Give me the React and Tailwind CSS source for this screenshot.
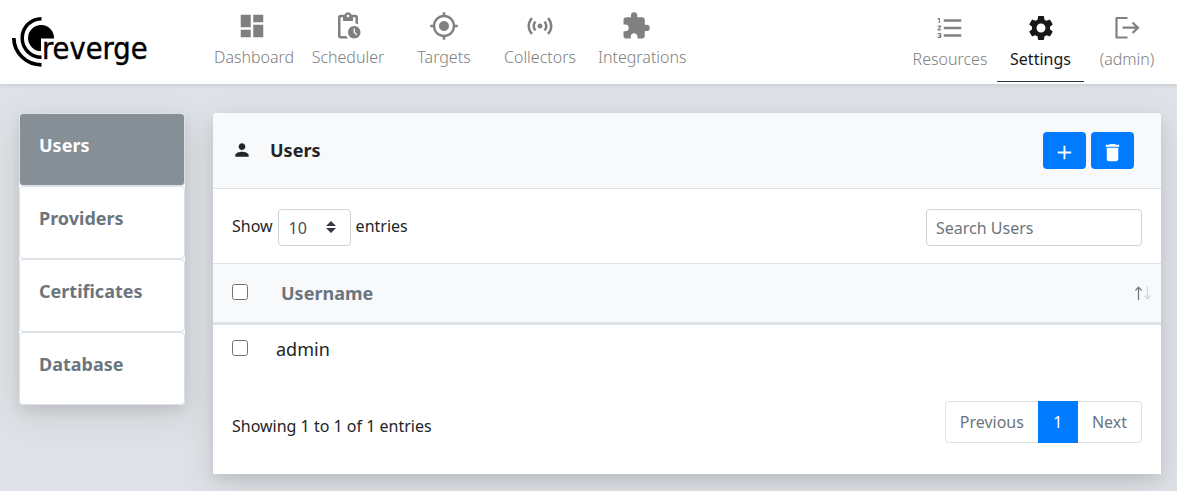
import {
  MdAdd,
  MdDashboard,
  MdDelete,
  MdExtension,
  MdFormatListNumbered,
  MdMyLocation,
  MdPendingActions,
  MdPerson,
  MdSensors,
  MdSettings,
} from "react-icons/md";

function Logo() {
  return (
    <svg width="148" height="60" viewBox="0 0 148 60" role="img" aria-label="reverge">
      <path d="M41 28.500V41A13 13 0 1 1 54 28.500z" fill="#000" />
      <path d="M41.5 8.7a19.3 19.3 0 0 0 0 38.6" fill="none" stroke="#000" strokeWidth="3.5" />
      <path d="M13.8 28a27.7 27.2 0 0 0 27.7 26.8" fill="none" stroke="#000" strokeWidth="3.7" />
      <text
        x="42"
        y="49"
        fontSize="30.500"
        className="font-['DejaVu_Sans_Condensed','DejaVu_Sans',sans-serif]"
        fill="#000"
        stroke="#000"
        strokeWidth="0.4"
      >
        reverge
      </text>
    </svg>
  );
}

function LogoutIcon() {
  return (
    <svg width="30" height="30" viewBox="0 0 30 30" fill="none" stroke="currentColor" strokeWidth="2.2">
      <path d="M15.500 5H4.500V24.500H15.500" strokeLinejoin="round" />
      <path d="M10.500 14.700H26M20.500 9.500L26 14.700L20.500 20" />
    </svg>
  );
}

function SortIcon() {
  return (
    <svg width="17" height="14" viewBox="0 0 17 14" fill="none" strokeWidth="1.2" className="inline-block align-middle">
      <path d="M4.500 14V1.500M1.500 4.500L4.500 1.200L7.500 4.500" stroke="#6c757d" />
      <path d="M13.500 0V12.500M10.500 9.500L13.500 12.800L16.500 9.500" stroke="#ced4da" />
    </svg>
  );
}

const mainLinks = [
  { label: "Dashboard", Icon: MdDashboard },
  { label: "Scheduler", Icon: MdPendingActions },
  { label: "Targets", Icon: MdMyLocation },
  { label: "Collectors", Icon: MdSensors },
  { label: "Integrations", Icon: MdExtension },
];

const sections = ["Users", "Providers", "Certificates", "Database"];

function Header() {
  return (
    <header className="relative flex h-[84px] justify-between bg-white pr-[7px] shadow-[0_2px_4px_rgba(0,0,0,0.08)]">
      <div className="flex">
        <a href="#home" className="mt-[10px] mr-14">
          <Logo />
        </a>
        <nav className="flex text-[#808080]">
          {mainLinks.map(({ label, Icon }) => (
            <a key={label} href="#nav" className="block w-24 px-[10px] pt-[11px] text-center leading-6 font-light whitespace-nowrap">
              <Icon size={30} className="mx-auto mb-1" />
              {label}
            </a>
          ))}
        </nav>
      </div>
      <nav className="flex h-[82px] text-[#808080]">
        <a href="#resources" className="flex w-[94px] flex-col items-center pt-[13px] leading-6 font-light">
          <MdFormatListNumbered size={30} />
          <span className="mt-1">Resources</span>
        </a>
        <a
          href="#settings"
          className="flex w-[87px] flex-col items-center border-b border-[#343a40] pt-[13px] leading-6 text-[#16181b]"
        >
          <MdSettings size={30} />
          <span className="mt-1">Settings</span>
        </a>
        <a href="#admin" className="flex w-[86px] flex-col items-center pt-[13px] leading-6 font-light">
          <LogoutIcon />
          <span className="mt-1">(admin)</span>
        </a>
      </nav>
    </header>
  );
}

function Sidebar() {
  return (
    <nav className="w-[166px] shrink-0 rounded bg-white shadow-[0_6px_12px_rgba(0,0,0,0.08),0_10px_36px_rgba(0,0,0,0.1)]">
      {sections.map((name, i) => (
        <a
          key={name}
          href="#section"
          className={
            "block h-[73px] rounded border border-[#dee2e6] px-[19px] pt-[17px] text-lg leading-7 font-bold " +
            (i === 0 ? "bg-[#868e96] text-white" : "bg-white text-[#6c757d]")
          }
        >
          {name}
        </a>
      ))}
    </nav>
  );
}

function UsersCard() {
  return (
    <section className="min-w-0 flex-1 rounded-t bg-white shadow-[0_6px_12px_rgba(0,0,0,0.08),0_10px_36px_rgba(0,0,0,0.1)]">
      <div className="flex h-[76px] items-center justify-between rounded-t border-b border-[#dee2e6] bg-[#f8f9fb] pr-[27px] pl-[19px]">
        <h1 className="flex items-center gap-[18px] pb-0.5 text-lg font-bold">
          <MdPerson size={20} />
          Users
        </h1>
        <div className="flex gap-[5px]">
          <button aria-label="Add user" className="flex h-[37px] w-[43px] items-center justify-center rounded bg-[#007bff] pt-[3px] text-white">
            <MdAdd size={23} />
          </button>
          <button aria-label="Delete users" className="flex h-[37px] w-[43px] items-center justify-center rounded bg-[#007bff] pt-[3px] text-white">
            <MdDelete size={23} />
          </button>
        </div>
      </div>

      <div className="flex items-center justify-between px-[19px] pt-5 pb-[17px]">
        <div className="flex items-start gap-[5px] leading-[34px]">
          <label htmlFor="page-size">Show</label>
          <span className="relative inline-flex">
            <select
              id="page-size"
              className="h-[37px] w-[73px] appearance-none rounded border border-[#ced4da] bg-white pl-[10px] text-[#495057]"
            >
              <option>10</option>
            </select>
            <svg width="10" height="12" viewBox="0 0 10 12" fill="#343a40" className="pointer-events-none absolute top-3 right-[15px]">
              <path d="M0 5L5 0l5 5zM0 7l5 5 5-5z" />
            </svg>
          </span>
          <span>entries</span>
        </div>
        <input
          type="search"
          aria-label="Search Users"
          placeholder="Search Users"
          className="h-[37px] w-[216px] rounded border border-[#ced4da] bg-white px-[9px] placeholder:text-[#6c757d]"
        />
      </div>

      <table className="w-full border-collapse text-left text-lg leading-7">
        <thead>
          <tr className="h-[60px] border-t border-b-[3px] border-t-[#dee2e6] border-b-[#dee2e6] bg-[#f8f9fb] text-[#6c757d]">
            <th className="w-[63px] pb-[3px] pl-[19px]">
              <input type="checkbox" aria-label="Select all" className="block h-4 w-4" />
            </th>
            <th className="pb-px pl-[5px] font-bold">Username</th>
            <th className="w-16 pr-[10px] pb-1 text-right">
              <SortIcon />
            </th>
          </tr>
        </thead>
        <tbody>
          <tr className="h-[52px]">
            <td className="pb-1 pl-[19px]">
              <input type="checkbox" aria-label="Select admin" className="block h-4 w-4" />
            </td>
            <td colSpan={2} className="pb-0.5">admin</td>
          </tr>
        </tbody>
      </table>

      <div className="flex items-center justify-between px-[19px] pt-[25px] pb-[31px]">
        <p className="pt-2">Showing 1 to 1 of 1 entries</p>
        <div className="flex h-[42px] text-[#6c757d]">
          <button className="rounded-l border border-r-0 border-[#dee2e6] px-[14px]">Previous</button>
          <button className="w-10 bg-[#007bff] text-white">1</button>
          <button className="rounded-r border border-l-0 border-[#dee2e6] px-[14px]">Next</button>
        </div>
      </div>
    </section>
  );
}

export default function App() {
  return (
    <div className="min-h-screen bg-[#dee2e6] font-['Noto_Sans',sans-serif] text-base text-[#212529]">
      <Header />
      <main className="flex items-start gap-7 pt-[29px] pr-4 pb-4 pl-[19px]">
        <Sidebar />
        <UsersCard />
      </main>
    </div>
  );
}
